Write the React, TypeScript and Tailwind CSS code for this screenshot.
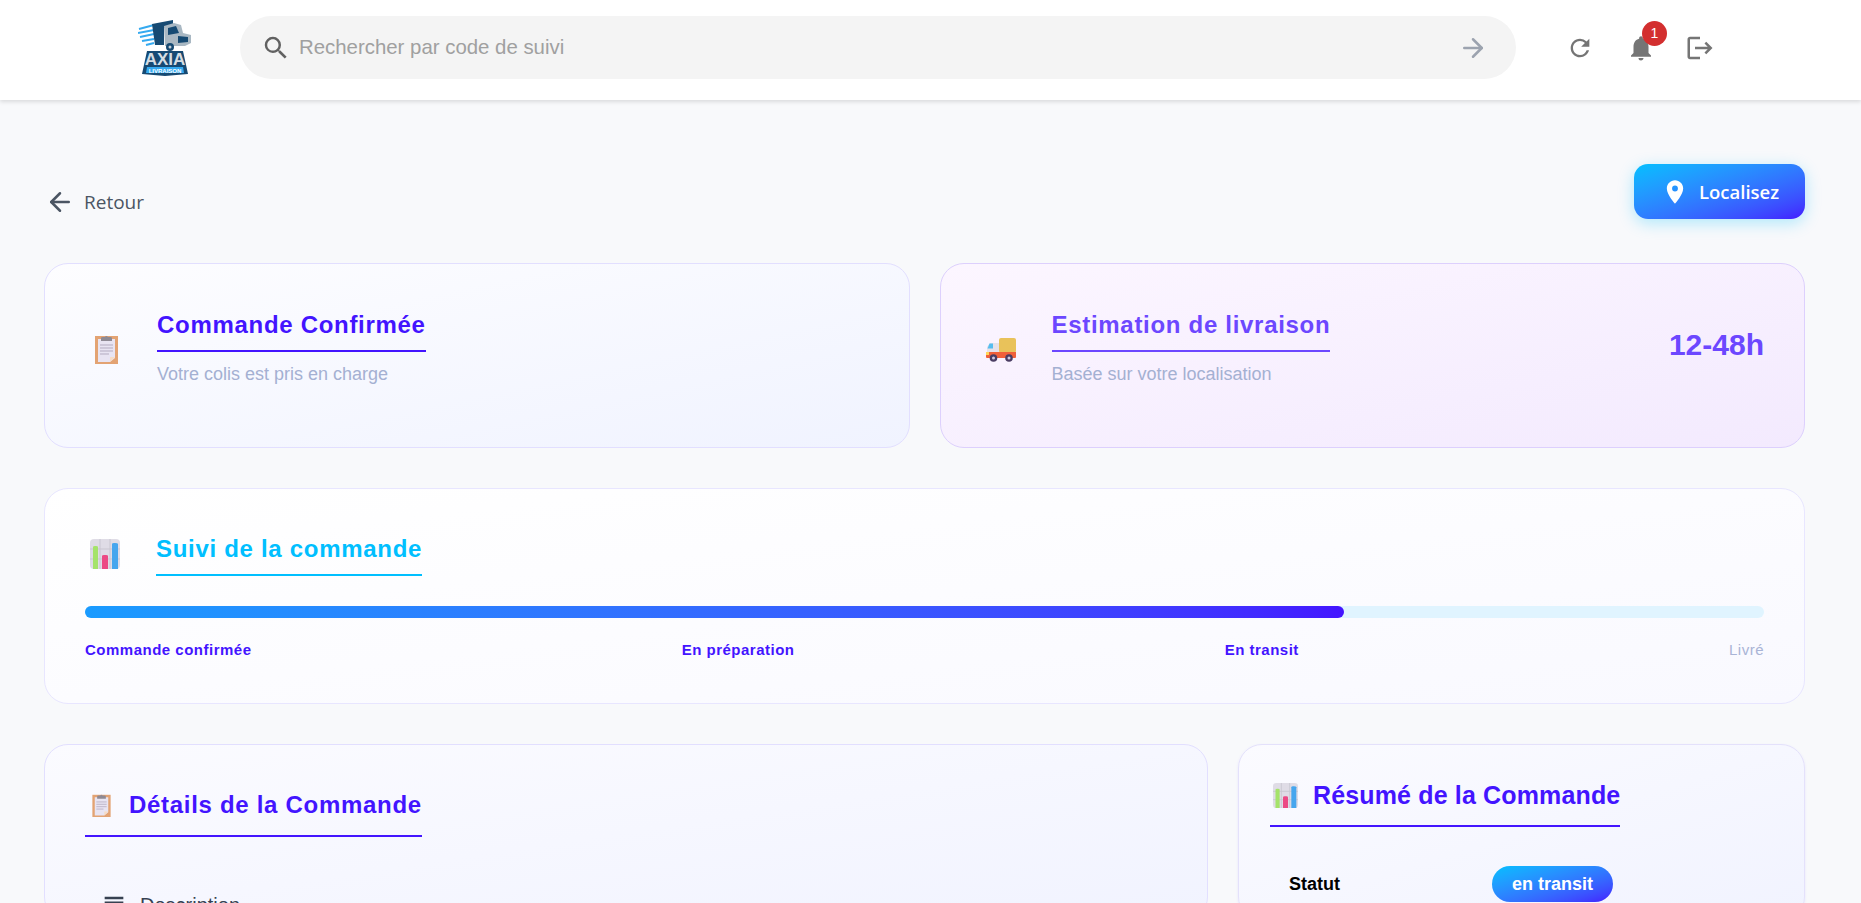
import React from 'react';
import { ArrowLeft, ArrowRight } from 'lucide-react';
import { MdLocationOn, MdLogout, MdNotifications, MdRefresh, MdSearch, MdSubject } from 'react-icons/md';

const ClipboardIcon = ({ className }: { className: string }) => (
    <svg viewBox="0 0 23 29" className={className}>
        <rect x="0" y="1" width="23" height="28" fill="#e3a373" />
        <path d="M3 4h17v19l-5 4H3z" fill="#e8e4f2" />
        <path d="M15 27l5-5h-5z" fill="#f6dcc6" />
        <path d="M6 3q0-1 2-1h2q1-2 3 0h2q2 0 2 1v3H6z" fill="#8f8a94" />
        <path d="M5 10h13M5 13h13M5 16h13M5 19h9" stroke="#b3abc0" strokeWidth="1" />
    </svg>
);

const TruckIcon = ({ className }: { className: string }) => (
    <svg viewBox="0 0 30 24" className={className}>
        <rect x="13" y="0" width="17" height="15" rx="2" fill="#e9c25a" />
        <path d="M4 5h9v10H1V9z" fill="#e6e1ea" />
        <path d="M3.500 5.500H7v5H1.500z" fill="#55bdf0" />
        <path d="M0 14h30v5q0 1-1 1H1q-1 0-1-1z" fill="#f0603a" />
        <rect x="0" y="14" width="3" height="3" fill="#ffd75a" />
        <circle cx="7.500" cy="20" r="3.800" fill="#4a3d63" />
        <circle cx="7.500" cy="20" r="1.500" fill="#cfc8de" />
        <circle cx="23" cy="20" r="3.800" fill="#4a3d63" />
        <circle cx="23" cy="20" r="1.500" fill="#cfc8de" />
    </svg>
);

const ChartIcon = ({ className }: { className: string }) => (
    <svg viewBox="0 0 30 30" className={className}>
        <rect width="30" height="30" rx="4" fill="#dfdce6" />
        <path d="M0 10h30M0 20h30M10 0v30M20 0v30" stroke="#c9c6d1" strokeWidth="1" />
        <path d="M3 8q0-1 2-1h1q2 0 2 1v22H3z" fill="#a5e36a" />
        <path d="M12 17q0-1 2-1h2q2 0 2 1v13h-6z" fill="#ec4a85" />
        <path d="M22 5q0-1 2-1h1q3 0 3 1v25h-6z" fill="#46a6ee" />
    </svg>
);

const Logo = () => (
    <svg viewBox="0 0 54 56" className="h-[56px] w-[54px]">
        <path d="M1 9l15-4M0 13l16-3M2 17l14-3M4 21l12-2M8 25l8-2" stroke="#35aaf0" strokeWidth="2" />
        <path d="M14 4l21-4v5l-9 3v17H17z" fill="#164a73" />
        <path d="M26 6l10-3 7 2 2 8 8 2v8l-6 3H27z" fill="#a9b8c3" />
        <path d="M30 8l8-2 3 7-11 2z" fill="#164a73" />
        <path d="M40 16l10 1v5l-10 1z" fill="#164a73" />
        <circle cx="32" cy="27" r="4" fill="#164a73" />
        <circle cx="32" cy="27" r="1.500" fill="#c5d0d8" />
        <path d="M4 54L9 31h36l5 23-23 2z" fill="#164a73" />
        <text x="27" y="45" textAnchor="middle" fontFamily="Liberation Sans" fontWeight="700" fontSize="17" fill="#d5dde3">AXIA</text>
        <path d="M9 47h36l1 6H8z" fill="#35aaf0" />
        <text x="27" y="52.500" textAnchor="middle" fontFamily="Liberation Sans" fontWeight="700" fontSize="6" fill="#ffffff">LIVRAISON</text>
    </svg>
);

const steps = [
    { label: 'Commande confirmée', done: true },
    { label: 'En préparation', done: true },
    { label: 'En transit', done: true },
    { label: 'Livré', done: false },
];

export default function App() {
    return (
        <div className="h-[903px] overflow-hidden bg-[#f8f9fb] font-['Liberation_Sans',sans-serif]">
            <header className="relative z-10 flex h-[100px] items-center bg-white pb-[5px] pl-[138px] shadow-[0_2px_4px_rgba(0,0,0,0.12)]">
                <Logo />
                <div className="ml-[48px] flex h-[63px] w-[1276px] items-center rounded-full bg-[#f4f4f4] pl-[21px] pr-[28px]">
                    <MdSearch className="text-[30px] text-[#616161]" />
                    <span className="ml-[8px] flex-1 text-[20.400px] text-[#a0a0a0]">Rechercher par code de suivi</span>
                    <ArrowRight size={30} strokeWidth={2} className="text-[#9ca3af]" />
                </div>
                <div className="ml-[50px] flex items-center gap-[26px] text-[#757575]">
                    <MdRefresh className="text-[28px]" />
                    <div className="relative ml-[6px]">
                        <MdNotifications className="text-[30px]" />
                        <span className="absolute left-[16px] top-[-12px] flex h-[25px] w-[25px] items-center justify-center rounded-full bg-[#d32f2f] text-[14px] text-white">1</span>
                    </div>
                    <MdLogout className="ml-[3px] text-[30px]" />
                </div>
            </header>

            <main className="pl-[44px] pr-[56px] pt-[64px]">
                <div className="mb-[44px] flex items-end justify-between">
                    <button className="mb-[2px] ml-[1px] flex items-center gap-[9px] font-['Open_Sans',sans-serif] text-[19px] text-[#4b5563]">
                        <ArrowLeft size={30} strokeWidth={2} />
                        Retour
                    </button>
                    <button className="flex h-[55px] w-[171px] items-center rounded-[14px] bg-gradient-to-br from-[#00bfff] to-[#4314ff] pl-[27px] pt-[1px] font-['Open_Sans',sans-serif] text-[18.500px] font-semibold text-white shadow-[0_4px_16px_rgba(0,191,255,0.3)]">
                        <MdLocationOn className="text-[28px]" />
                        <span className="ml-[10px]">Localisez</span>
                    </button>
                </div>

                <div className="mb-[40px] grid grid-cols-2 gap-[30px]">
                    <section className="flex h-[185px] items-center rounded-[24px] border border-[#e2dfff] bg-gradient-to-br from-[#fdfdff] to-[#f0f3ff] pb-[20px] pl-[50px] pr-[40px]">
                        <ClipboardIcon className="mt-[8px] h-[29px] w-[23px]" />
                        <div className="ml-[39px]">
                            <h2 className="inline-block border-b-2 border-[#4314ff] pb-[6px] text-[24px] font-bold leading-[38px] tracking-[0.7px] text-[#4314ff]">Commande Confirmée</h2>
                            <p className="mt-[10px] text-[18px] leading-[24px] text-[#a4b0d2]">Votre colis est pris en charge</p>
                        </div>
                    </section>
                    <section className="flex h-[185px] items-center rounded-[24px] border border-[#ddd0fd] bg-gradient-to-br from-[#fcf6ff] to-[#f3eafe] pb-[20px] pl-[45px] pr-[40px]">
                        <TruckIcon className="mt-[8px] h-[24px] w-[30px]" />
                        <div className="ml-[36px] flex-1">
                            <h2 className="inline-block border-b-2 border-[#6c47ff] pb-[6px] text-[24px] font-bold leading-[38px] tracking-[0.7px] text-[#6c47ff]">Estimation de livraison</h2>
                            <p className="mt-[10px] text-[18px] leading-[24px] text-[#a4b0d2]">Basée sur votre localisation</p>
                        </div>
                        <span className="-mt-[2px] text-[30px] font-bold text-[#6c47ff]">12-48h</span>
                    </section>
                </div>

                <section className="mb-[40px] h-[216px] rounded-[24px] border border-[#e8e6ff] bg-gradient-to-br from-white to-[#f9f9ff] px-[40px] pt-[42px]">
                    <div className="flex items-center">
                        <ChartIcon className="ml-[5px] h-[30px] w-[30px]" />
                        <h2 className="ml-[36px] inline-block border-b-2 border-[#00bfff] pb-[7px] text-[24px] font-bold leading-[36px] tracking-[0.7px] text-[#00bfff]">Suivi de la commande</h2>
                    </div>
                    <div className="mt-[30px] h-[12px] rounded-full bg-[#e0f4ff]">
                        <div className="h-full w-3/4 rounded-full bg-gradient-to-r from-[#1a9bff] to-[#4314ff]" />
                    </div>
                    <div className="mt-[22px] flex justify-between text-[15px] leading-[20px] tracking-[0.5px]">
                        {steps.map((step) => (
                            <span key={step.label} className={step.done ? 'font-bold text-[#4314ff]' : 'text-[#a9b4d6]'}>
                                {step.label}
                            </span>
                        ))}
                    </div>
                </section>

                <div className="grid grid-cols-[1164px_567px] gap-[30px]">
                    <section className="rounded-[24px] border border-[#e2dfff] bg-gradient-to-br from-[#fbfbff] to-[#f1f3ff] px-[40px] pt-[42px]">
                        <h2 className="inline-flex items-center border-b-2 border-[#4314ff] pb-[12px] text-[24px] font-bold leading-[36px] tracking-[0.7px] text-[#4314ff]">
                            <ClipboardIcon className="ml-[7px] mr-[18px] h-[23px] w-[19px]" />
                            Détails de la Commande
                        </h2>
                        <div className="ml-[15px] mt-[53px] flex items-center gap-[12px] text-[20px] text-[#374151]">
                            <MdSubject className="text-[28px]" />
                            Description
                        </div>
                    </section>
                    <section className="rounded-[24px] border border-[#e4e1fb] bg-gradient-to-br from-[#fbfbff] to-[#f1f3ff] px-[31px] pt-[32px] shadow-[0_1px_3px_rgba(67,20,255,0.08)]">
                        <h2 className="inline-flex items-center border-b-2 border-[#4314ff] pb-[12px] text-[25px] font-bold leading-[36px] tracking-[0.15px] text-[#4314ff]">
                            <ChartIcon className="ml-[3px] mr-[15px] h-[25px] w-[25px]" />
                            Résumé de la Commande
                        </h2>
                        <div className="ml-[19px] mt-[39px] flex items-center">
                            <span className="w-[203px] text-[18px] font-bold text-black">Statut</span>
                            <span className="flex h-[36px] w-[121px] items-center justify-center rounded-full bg-gradient-to-br from-[#00bfff] to-[#4314ff] text-[18px] font-bold text-white">en transit</span>
                        </div>
                    </section>
                </div>
            </main>
        </div>
    );
}
